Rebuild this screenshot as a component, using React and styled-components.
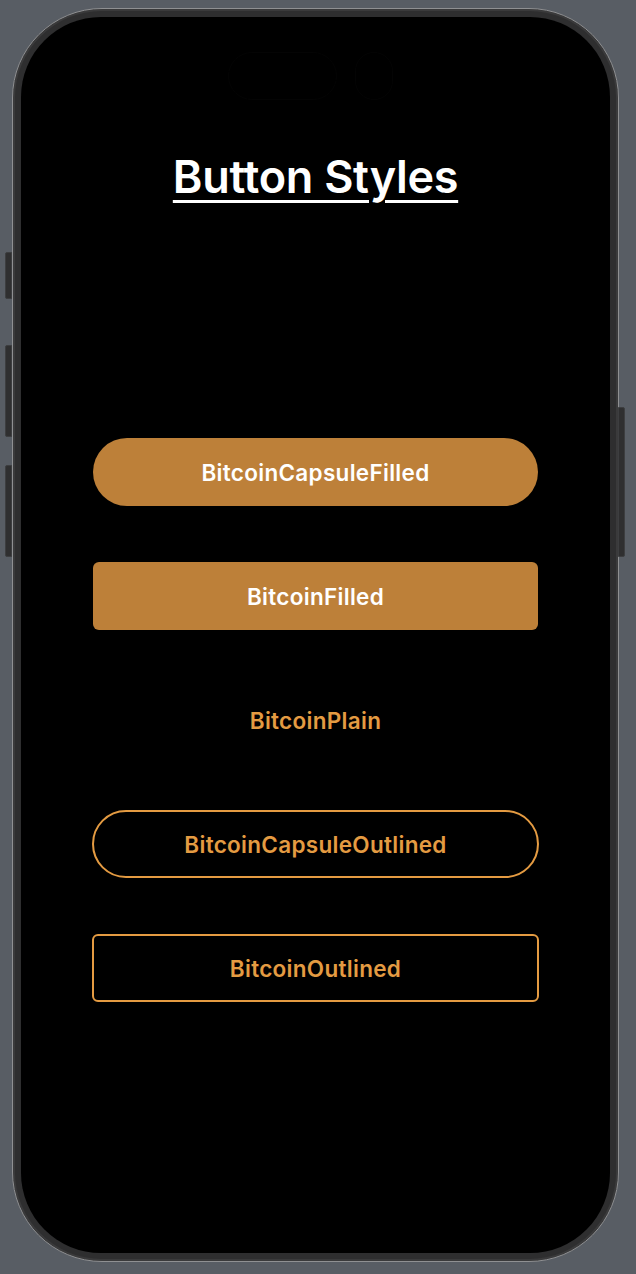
import React from 'react';
import styled, { createGlobalStyle } from 'styled-components';

const GlobalStyle = createGlobalStyle`
  html, body {
    margin: 0;
    padding: 0;
    background: #585d64;
  }
  body {
    font-family: Inter, "Noto Sans", "Liberation Sans", sans-serif;
  }
`;

const ORANGE = '#e49b42';
const FILL = '#bd8039';

// Estilos
const Page = styled.div`
  width: 636px;
  height: 1274px;
  padding: 8px 0 0 12px;
  box-sizing: border-box;
`;

const Device = styled.div`
  position: relative;
  width: 607px;
  height: 1254px;
  box-sizing: border-box;
  border: 1px solid #8f9092;
  border-radius: 90px;
  background: #2e2e2f;
  padding: 8px;
  box-shadow: inset 0 0 0 2px #3a3a3b;
`;

// botões laterais do aparelho (por fora da moldura)
const SideGroup = styled.div`
  position: absolute;
  top: ${(p) => p.$top}px;
  ${(p) => (p.$right ? 'right: -7px;' : 'left: -8px;')}
  display: flex;
  flex-direction: column;
`;

const SideButton = styled.div`
  width: 7px;
  height: ${(p) => p.$height}px;
  margin-top: ${(p) => p.$gap || 0}px;
  background: #2f2f30;
  border: 1px solid #3d3e40;
  box-sizing: border-box;
  border-radius: ${(p) => (p.$right ? '0 2px 2px 0' : '2px 0 0 2px')};
`;

const Screen = styled.div`
  position: relative;
  height: 100%;
  background: #000;
  border-radius: 80px;
  display: flex;
  flex-direction: column;
  align-items: center;
  overflow: hidden;
`;

const IslandRow = styled.div`
  position: absolute;
  top: 35px;
  left: 207px;
  display: flex;
  gap: 18px;
`;

const Island = styled.div`
  width: ${(p) => p.$width}px;
  height: 48px;
  border-radius: 24px;
  border: 1px solid #040404;
  box-sizing: border-box;
`;

const Titulo = styled.h1`
  margin: 133px 0 0;
  color: #fff;
  font-size: 45px;
  font-weight: 600;
  letter-spacing: -0.3px;
  line-height: 54px;
  text-decoration: underline;
  text-decoration-thickness: 3px;
  text-underline-offset: 7px;
`;

const Lista = styled.div`
  margin-top: 234px;
  width: 445px;
  display: flex;
  flex-direction: column;
  gap: 56px;
`;

const Botao = styled.button`
  height: 68px;
  width: 100%;
  box-sizing: border-box;
  display: flex;
  align-items: center;
  justify-content: center;
  font-family: inherit;
  font-size: 22.5px;
  font-weight: 600;
  letter-spacing: 0.3px;
  border-radius: ${(p) => (p.$capsule ? '34px' : '6px')};
  background: ${(p) => (p.$kind === 'filled' ? FILL : 'transparent')};
  color: ${(p) => (p.$kind === 'filled' ? '#fff' : ORANGE)};
  border: ${(p) => (p.$kind === 'outlined' ? `2px solid ${ORANGE}` : 'none')};
  ${(p) => (p.$kind === 'outlined' ? 'width: calc(100% + 2px); margin-left: -1px;' : '')}
  cursor: pointer;
`;

const botoes = [
  { label: 'BitcoinCapsuleFilled', kind: 'filled', capsule: true },
  { label: 'BitcoinFilled', kind: 'filled', capsule: false },
  { label: 'BitcoinPlain', kind: 'plain', capsule: false },
  { label: 'BitcoinCapsuleOutlined', kind: 'outlined', capsule: true },
  { label: 'BitcoinOutlined', kind: 'outlined', capsule: false },
];

export default function App() {
  return (
    <Page>
      <GlobalStyle />
      <Device>
        <SideGroup $top={243}>
          <SideButton $height={47} />
          <SideButton $height={92} $gap={46} />
          <SideButton $height={92} $gap={28} />
        </SideGroup>
        <SideGroup $right $top={398}>
          <SideButton $right $height={150} />
        </SideGroup>
        <Screen>
          <IslandRow>
            <Island $width={109} />
            <Island $width={38} />
          </IslandRow>
          <Titulo>Button Styles</Titulo>
          <Lista>
            {botoes.map((b) => (
              <Botao key={b.label} $kind={b.kind} $capsule={b.capsule}>
                {b.label}
              </Botao>
            ))}
          </Lista>
        </Screen>
      </Device>
    </Page>
  );
}
